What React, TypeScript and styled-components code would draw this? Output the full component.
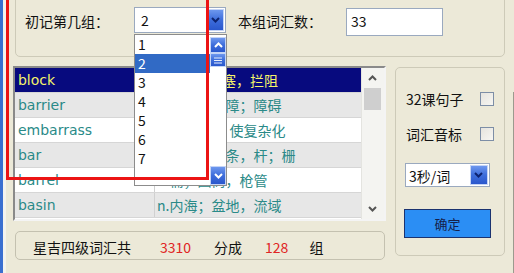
import styled, { createGlobalStyle } from 'styled-components';

const GlobalStyle = createGlobalStyle`
  html, body {
    margin: 0;
    padding: 0;
    background: #ece9d8;
  }
  body {
    font-family: "Noto Sans CJK SC", sans-serif;
    font-size: 14px;
    color: #111;
  }
`;

const Screen = styled.div`
  position: relative;
  width: 514px;
  height: 273px;
  overflow: hidden;
  display: flex;
  background: #ece9d8;
`;

const WindowEdge = styled.div`
  width: 3px;
  background: #3a6fd0;
  border-right: 3px solid #f4f3ee;
`;

const Main = styled.div`
  width: 497px;
  padding-left: 7px;
  display: flex;
  flex-direction: column;
`;

const SideLine = styled.div`
  width: 1px;
  margin: 92px 0 0 6px;
  background: #9c9a8e;
`;

const TopGroup = styled.div`
  box-sizing: border-box;
  margin: -10px 0 0 2px;
  width: 490px;
  height: 67px;
  border: 1px solid #cdcab8;
  border-radius: 5px;
  display: flex;
  align-items: flex-start;
  padding: 16px 0 0 9px;
`;

const FieldLabel = styled.div<{ $w: number; $ml?: number }>`
  width: ${(p) => p.$w}px;
  margin-left: ${(p) => p.$ml || 0}px;
  height: 28px;
  line-height: 28px;
  font-size: 14px;
  white-space: nowrap;
`;

const Combo = styled.div<{ $w: number }>`
  box-sizing: border-box;
  width: ${(p) => p.$w}px;
  height: 26px;
  background: #fff;
  border: 1px solid #9aa9bf;
  display: flex;
  align-items: stretch;
  padding: 1px;
`;

const ComboText = styled.div`
  flex: 1;
  padding-left: 5px;
  line-height: 22px;
  font-size: 14px;
  white-space: nowrap;
`;

const BlueButton = styled.div<{ $w?: number }>`
  box-sizing: border-box;
  width: ${(p) => p.$w || 16}px;
  background: linear-gradient(180deg, #6d97ee 0%, #3d6ddb 50%, #2a57cc 100%);
  border: 1px solid #c4d4f6;
  display: flex;
  align-items: center;
  justify-content: center;
`;

const TextInput = styled.div`
  box-sizing: border-box;
  width: 97px;
  height: 28px;
  margin-top: 1px;
  background: #fff;
  border: 1px solid #9aa9bf;
  padding-left: 4px;
  line-height: 24px;
  font-size: 14px;
`;

const MidRow = styled.div`
  margin-top: 9px;
  display: flex;
  align-items: flex-start;
`;

const LeftCol = styled.div`
  width: 373px;
  display: flex;
  flex-direction: column;
`;

const Table = styled.div`
  box-sizing: border-box;
  height: 155px;
  border: 2px solid;
  border-color: #8a8a8a #f4f4f4 #f4f4f4 #8a8a8a;
  background: #fff;
  display: flex;
`;

const Rows = styled.div`
  flex: 1;
  display: flex;
  flex-direction: column;
`;

const Row = styled.div<{ $kind: 'sel' | 'odd' | 'even' }>`
  box-sizing: border-box;
  height: 25px;
  display: grid;
  grid-template-columns: 140px 1fr;
  border-bottom: 1px solid #d6d6d6;
  background: ${(p) => (p.$kind === 'sel' ? '#070a7e' : p.$kind === 'odd' ? '#e7e7e7' : '#ffffff')};
  color: ${(p) => (p.$kind === 'sel' ? '#f4f46a' : '#2a8a88')};
`;

const WordCell = styled.div`
  border-right: 1px solid #d0d0d0;
  padding-left: 3px;
  line-height: 24px;
  font-family: "DejaVu Sans", sans-serif;
  font-size: 14px;
  white-space: nowrap;
  overflow: hidden;
`;

const MeanCell = styled.div`
  padding-left: 2px;
  line-height: 24px;
  font-size: 14px;
  white-space: nowrap;
  overflow: hidden;
`;

const ScrollBar = styled.div`
  width: 22px;
  background: #f4f4f1;
  border-left: 1px solid #e4e4e0;
  display: flex;
  flex-direction: column;
  align-items: center;
`;

const ScrollArrow = styled.div`
  height: 20px;
  display: flex;
  align-items: center;
  justify-content: center;
`;

const ScrollThumb = styled.div`
  width: 17px;
  height: 22px;
  background: #cfcfcf;
`;

const ScrollTrack = styled.div`
  flex: 1;
`;

const BottomBar = styled.div`
  box-sizing: border-box;
  margin: 10px 0 0 2px;
  width: 370px;
  height: 29px;
  border: 1px solid #c4c1b0;
  border-radius: 5px;
  display: flex;
  align-items: center;
  padding: 2px 0 0 17px;
  font-size: 14px;
`;

const BarText = styled.span<{ $ml?: number; $red?: boolean }>`
  margin-left: ${(p) => p.$ml || 0}px;
  color: ${(p) => (p.$red ? '#e02424' : '#111')};
  white-space: nowrap;
`;

const RightGroup = styled.div`
  box-sizing: border-box;
  margin: 1px 0 0 9px;
  width: 110px;
  height: 189px;
  border: 1px solid #cdcab8;
  border-radius: 5px;
  display: flex;
  flex-direction: column;
  padding: 21px 0 0 10px;
`;

const CheckRow = styled.div<{ $mt?: number }>`
  width: 88px;
  height: 20px;
  margin-top: ${(p) => p.$mt || 0}px;
  display: flex;
  align-items: center;
  justify-content: space-between;
  white-space: nowrap;
  font-size: 14px;
`;

const CheckBox = styled.div`
  box-sizing: border-box;
  width: 14px;
  height: 14px;
  border: 1px solid #7d8ea6;
  background: linear-gradient(135deg, #e6e4de 0%, #f7f6f2 100%);
`;

const SmallCombo = styled(Combo)`
  margin: 19px 0 0 -1px;
  height: 24px;
`;

const OkButton = styled.div`
  box-sizing: border-box;
  margin: 22px 0 0 -2px;
  width: 87px;
  height: 29px;
  background: #2b8ef4;
  border: 1px solid #1b3370;
  display: flex;
  align-items: center;
  justify-content: center;
  font-size: 13px;
  color: #15204a;
`;

const DropList = styled.div`
  position: absolute;
  left: 134px;
  top: 34px;
  box-sizing: border-box;
  width: 93px;
  height: 152px;
  background: #fff;
  border: 1px solid #8c8c8c;
  display: flex;
  z-index: 2;
`;

const DropItems = styled.div`
  flex: 1;
  display: flex;
  flex-direction: column;
`;

const DropItem = styled.div<{ $active?: boolean }>`
  height: 19px;
  line-height: 19px;
  padding-left: 3px;
  font-size: 14px;
  background: ${(p) => (p.$active ? '#316ac5' : 'transparent')};
  color: ${(p) => (p.$active ? '#fff' : '#111')};
`;

const DropScroll = styled.div`
  width: 16px;
  padding-top: 2px;
  display: flex;
  flex-direction: column;
`;

const DropBtn = styled(BlueButton)<{ $h: number }>`
  width: 16px;
  height: ${(p) => p.$h}px;
`;

const RedFrame = styled.div`
  position: absolute;
  left: 6px;
  top: -10px;
  box-sizing: border-box;
  width: 203px;
  height: 190px;
  border: 3px solid #ec1414;
  z-index: 3;
`;

const Chevron = ({ up, color = '#fff' }: { up?: boolean; color?: string }) => (
  <svg width="9" height="6" viewBox="0 0 9 6">
    <path
      d={up ? 'M1 5 L4.5 1.5 L8 5' : 'M1 1 L4.5 4.5 L8 1'}
      fill="none"
      stroke={color}
      strokeWidth="2"
    />
  </svg>
);

const Grip = () => (
  <svg width="8" height="7" viewBox="0 0 8 7">
    <path d="M0 1H8M0 3.5H8M0 6H8" stroke="#e8eefc" strokeWidth="1" />
  </svg>
);

const words = [
  { w: 'block', m: 'n.块；v.阻塞，拦阻' },
  { w: 'barrier', m: 'n.栅栏，屏障；障碍' },
  { w: 'embarrass', m: 'vt.使窘迫，使复杂化' },
  { w: 'bar', m: 'n.酒吧；长条，杆；栅' },
  { w: 'barrel', m: 'n.桶；圆筒，枪管' },
  { w: 'basin', m: 'n.内海；盆地，流域' },
];

const groups = ['1', '2', '3', '4', '5', '6', '7', ''];

export default function App() {
  return (
    <Screen>
      <GlobalStyle />
      <WindowEdge />
      <Main>
        <TopGroup>
          <FieldLabel $w={109}>初记第几组：</FieldLabel>
          <Combo $w={92}>
            <ComboText>2</ComboText>
            <BlueButton>
              <Chevron color="#0d2370" />
            </BlueButton>
          </Combo>
          <FieldLabel $w={108} $ml={12}>本组词汇数：</FieldLabel>
          <TextInput>33</TextInput>
        </TopGroup>

        <MidRow>
          <LeftCol>
            <Table>
              <Rows>
                {words.map((r, i) => (
                  <Row key={r.w} $kind={i === 0 ? 'sel' : i % 2 === 1 ? 'odd' : 'even'}>
                    <WordCell>{r.w}</WordCell>
                    <MeanCell>{r.m}</MeanCell>
                  </Row>
                ))}
              </Rows>
              <ScrollBar>
                <ScrollArrow>
                  <Chevron up color="#555" />
                </ScrollArrow>
                <ScrollThumb />
                <ScrollTrack />
                <ScrollArrow>
                  <Chevron color="#555" />
                </ScrollArrow>
              </ScrollBar>
            </Table>
            <BottomBar>
              <BarText>星吉四级词汇共</BarText>
              <BarText $ml={29} $red>3310</BarText>
              <BarText $ml={23}>分成</BarText>
              <BarText $ml={23} $red>128</BarText>
              <BarText $ml={21}>组</BarText>
            </BottomBar>
          </LeftCol>

          <RightGroup>
            <CheckRow>
              <span>32课句子</span>
              <CheckBox />
            </CheckRow>
            <CheckRow $mt={15}>
              <span>词汇音标</span>
              <CheckBox />
            </CheckRow>
            <SmallCombo $w={85}>
              <ComboText style={{ paddingLeft: 2 }}>3秒/词</ComboText>
              <BlueButton $w={18}>
                <Chevron color="#0d2370" />
              </BlueButton>
            </SmallCombo>
            <OkButton>确定</OkButton>
          </RightGroup>
        </MidRow>
      </Main>
      <SideLine />

      <DropList>
        <DropItems>
          {groups.map((g, i) => (
            <DropItem key={i} $active={g === '2'}>
              {g}
            </DropItem>
          ))}
        </DropItems>
        <DropScroll>
          <DropBtn $h={16}>
            <Chevron up />
          </DropBtn>
          <DropBtn $h={14}>
            <Grip />
          </DropBtn>
          <ScrollTrack />
          <DropBtn $h={19}>
            <Chevron />
          </DropBtn>
        </DropScroll>
      </DropList>
      <RedFrame />
    </Screen>
  );
}
